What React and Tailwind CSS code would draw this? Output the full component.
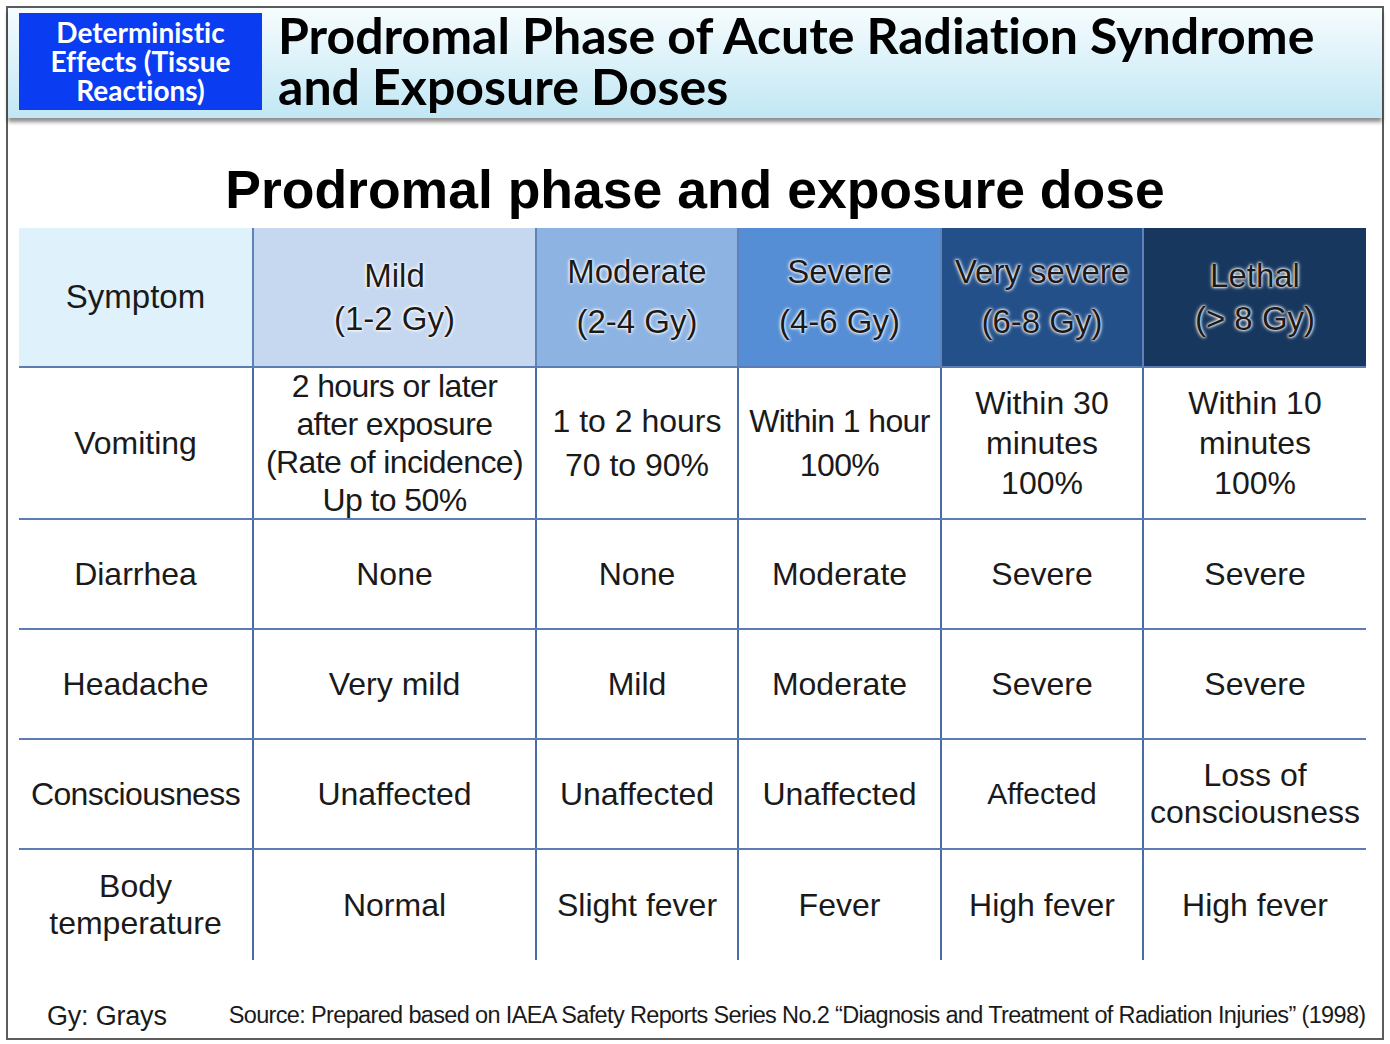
import React from 'react';

const cols = ['w-[233px]', 'w-[283px]', 'w-[202px]', 'w-[203px]', 'w-[202px]', 'w-[224px]'];

const heads = [
  { lines: ['Symptom'], bg: 'bg-[#dff2fc]', glow: false, lead: 'leading-[44px]' },
  { lines: ['Mild', '(1-2 Gy)'], bg: 'bg-[#c6d8ef]', glow: true, lead: 'leading-[43px]' },
  { lines: ['Moderate', '(2-4 Gy)'], bg: 'bg-[#8db3e2]', glow: true, lead: 'leading-[50px]' },
  { lines: ['Severe', '(4-6 Gy)'], bg: 'bg-[#558ed5]', glow: true, lead: 'leading-[50px]' },
  { lines: ['Very severe', '(6-8 Gy)'], bg: 'bg-[#24508a]', glow: true, lead: 'leading-[50px]' },
  { lines: ['Lethal', '(> 8 Gy)'], bg: 'bg-[#17375e]', glow: true, lead: 'leading-[43px]' },
];

const rows = [
  {
    h: 'h-[152px]',
    cells: [
      { lines: ['Vomiting'] },
      { lines: ['2 hours or later', 'after exposure', '(Rate of incidence)', 'Up to 50%'], lead: 'leading-[38px]', tight: true },
      { lines: ['1 to 2 hours', '70 to 90%'], lead: 'leading-[44px]' },
      { lines: ['Within 1 hour', '100%'], lead: 'leading-[44px]', tight: true },
      { lines: ['Within 30', 'minutes', '100%'], lead: 'leading-[40px]' },
      { lines: ['Within 10', 'minutes', '100%'], lead: 'leading-[40px]' },
    ],
  },
  {
    h: 'h-[110px]',
    cells: [
      { lines: ['Diarrhea'] },
      { lines: ['None'] },
      { lines: ['None'] },
      { lines: ['Moderate'] },
      { lines: ['Severe'] },
      { lines: ['Severe'] },
    ],
  },
  {
    h: 'h-[110px]',
    cells: [
      { lines: ['Headache'] },
      { lines: ['Very mild'] },
      { lines: ['Mild'] },
      { lines: ['Moderate'] },
      { lines: ['Severe'] },
      { lines: ['Severe'] },
    ],
  },
  {
    h: 'h-[110px]',
    cells: [
      { lines: ['Consciousness'], tight: true },
      { lines: ['Unaffected'] },
      { lines: ['Unaffected'] },
      { lines: ['Unaffected'] },
      { lines: ['Affected'], small: true },
      { lines: ['Loss of', 'consciousness'], lead: 'leading-[37px]' },
    ],
  },
  {
    h: 'h-[110px]',
    cells: [
      { lines: ['Body', 'temperature'], lead: 'leading-[37px]' },
      { lines: ['Normal'] },
      { lines: ['Slight fever'] },
      { lines: ['Fever'] },
      { lines: ['High fever'] },
      { lines: ['High fever'] },
    ],
  },
];

const Lines = ({ lines }) => lines.map((l, i) => <div key={i} className="whitespace-nowrap">{l}</div>);

export default function App() {
  return (
    <div className="w-[1390px] h-[1044px] bg-white p-[6px] font-['Liberation_Sans',Arial,sans-serif] text-[#1a1a1a]">
      <div className="h-[1034px] border-2 border-[#5c5c5c] flex flex-col">
        {/* Title band */}
        <div className="h-[110px] flex items-start pt-[5px] pl-[11px] gap-[16px] bg-gradient-to-b from-[#f6fcfe] to-[#c1e7f4] shadow-[0_4px_4px_rgba(0,0,0,0.45)] relative z-10 [font-variant-ligatures:none]">
          <div className="w-[243px] h-[97px] bg-[#0a3df2] flex flex-col items-center justify-center text-white font-['Lato','Noto_Sans',sans-serif] font-bold text-[28px] leading-[29px]">
            <div>Deterministic</div>
            <div>Effects (Tissue</div>
            <div>Reactions)</div>
          </div>
          <div className="font-['Lato','Noto_Sans',sans-serif] font-bold text-[50px] leading-[51px] text-black -mt-[3px]">
            <div>Prodromal Phase of Acute Radiation Syndrome</div>
            <div>and Exposure Doses</div>
          </div>
        </div>

        {/* Subtitle */}
        <div className="h-[110px] flex items-end justify-center pb-[8px]">
          <h1 className="font-bold text-[53.5px] leading-[60px] text-black">Prodromal phase and exposure dose</h1>
        </div>

        {/* Table */}
        <div className="ml-[11px] w-[1347px] flex flex-col">
          <div className="flex h-[140px] border-b-2 border-[#5b7db4]">
            {heads.map((c, i) => (
              <div
                key={i}
                className={`${cols[i]} ${c.bg} ${c.lead} ${i > 0 ? 'border-l-2 border-[#5f82b8]' : ''} flex flex-col items-center justify-center text-[33px] text-center ${
                  c.glow ? '[text-shadow:0_0_2px_#fff,0_0_3px_#fff,0_0_4px_#fff]' : ''
                }`}
              >
                <Lines lines={c.lines} />
              </div>
            ))}
          </div>
          {rows.map((r, ri) => (
            <div key={ri} className={`flex ${r.h} ${ri < rows.length - 1 ? 'border-b-2 border-[#5b7db4]' : ''}`}>
              {r.cells.map((c, i) => (
                <div
                  key={i}
                  className={`${cols[i]} ${c.lead || 'leading-[38px]'} ${i > 0 ? 'border-l-2 border-[#4a6ba3]' : ''} flex flex-col items-center justify-center text-center ${
                    c.small ? 'text-[30px]' : 'text-[32px]'
                  } ${c.tight ? 'tracking-[-0.6px]' : ''}`}
                >
                  <Lines lines={c.lines} />
                </div>
              ))}
            </div>
          ))}
        </div>

        {/* Footer */}
        <div className="flex-1 flex items-center pl-[39px] pt-[34px] gap-[62px]">
          <div className="text-[27px] tracking-[-0.2px] whitespace-nowrap">Gy: Grays</div>
          <div className="text-[23.5px] tracking-[-0.65px] whitespace-nowrap">
            Source: Prepared based on IAEA Safety Reports Series No.2 “Diagnosis and Treatment of Radiation Injuries” (1998)
          </div>
        </div>
      </div>
    </div>
  );
}
